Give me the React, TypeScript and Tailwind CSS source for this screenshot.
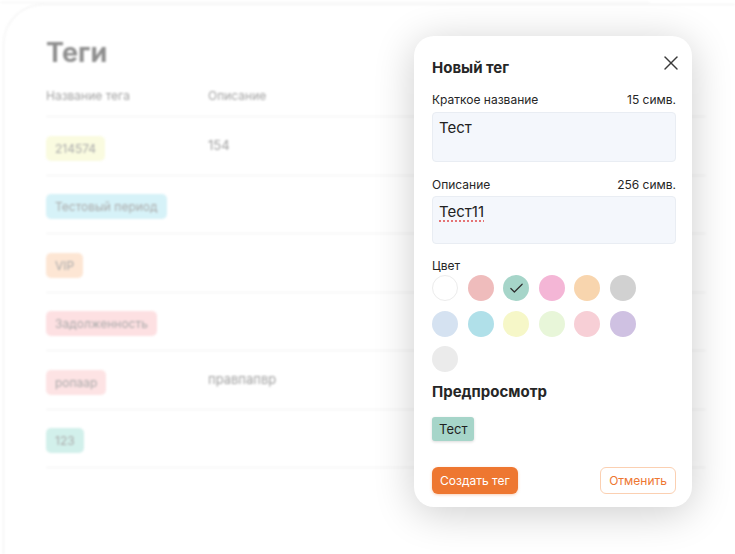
import { X, Check } from 'lucide-react';

const rows = [
    { name: '214574', bg: 'bg-[#fafbe0]', desc: '154' },
    { name: 'Тестовый период', bg: 'bg-[#d6f2f8]', desc: '' },
    { name: 'VIP', bg: 'bg-[#fde6d4]', desc: '' },
    { name: 'Задолженность', bg: 'bg-[#fde0e2]', desc: '' },
    { name: 'ропаар', bg: 'bg-[#fde3e4]', desc: 'правпапвр' },
    { name: '123', bg: 'bg-[#d2f0eb]', desc: '' },
];

const colors = [
    'bg-white border border-[#ececec]',
    'bg-[#efbcbc]',
    'bg-[#a6d5c9]',
    'bg-[#f4b6d6]',
    'bg-[#f8d5ae]',
    'bg-[#d1d1d1]',
    'bg-[#d5e2f1]',
    'bg-[#b0e0e9]',
    'bg-[#f6f7c8]',
    'bg-[#e8f6d9]',
    'bg-[#f7cfd6]',
    'bg-[#cfc1e2]',
    'bg-[#ebebeb]',
];

function TagsPage() {
    return (
        <div className="h-full pt-[4px] pl-[3px] blur-[1.2px]">
            <div className="h-full rounded-tl-[40px] border-l border-t border-[#f0f0f0] pl-[42px] pt-[30px]">
                <div className="text-[27px] leading-[36px] font-bold text-[#8e8e8e]">Теги</div>
                <div className="w-[660px]">
                    <div className="flex h-[46px] items-end pb-[11px] text-[12px] text-[#a3a3a3] border-b border-[#f2f2f2]">
                        <div className="w-[162px]">Название тега</div>
                        <div>Описание</div>
                    </div>
                    {rows.map((r, i) => (
                        <div key={i} className="flex h-[58.5px] items-center border-b border-[#f2f2f2]">
                            <div className="w-[162px] pt-[4px]">
                                <span className={`${r.bg} inline-block rounded-[5px] px-[9px] py-[5px] text-[12px] leading-[15px] text-[#ababab]`}>
                                    {r.name}
                                </span>
                            </div>
                            <div className="text-[13px] text-[#a0a0a0] -mt-[1px]">{r.desc}</div>
                        </div>
                    ))}
                </div>
            </div>
        </div>
    );
}

function NewTagModal() {
    return (
        <div className="absolute left-[414px] top-[36px] w-[278px] h-[471px] rounded-[20px] bg-white shadow-[0_6px_40px_rgba(0,0,0,0.2)] pl-[18px] pr-[16px] pt-[22px]">
            <button className="absolute right-[9px] top-[15px] text-[#3a3a3a]">
                <X size={24} strokeWidth={1.4} />
            </button>
            <div className="text-[15px] leading-[20px] font-bold text-[#262626]">Новый тег</div>

            <div className="mt-[14px] flex justify-between text-[12px] leading-[16px] text-[#262626]">
                <span>Краткое название</span>
                <span>15 симв.</span>
            </div>
            <div className="mt-[4px] h-[50px] rounded-[4px] border border-[#e9edf3] bg-[#f4f7fc] px-[6px] py-[5px] text-[15px] leading-[20px] text-[#222]">
                Тест
            </div>

            <div className="mt-[15px] flex justify-between text-[12px] leading-[16px] text-[#262626]">
                <span>Описание</span>
                <span>256 симв.</span>
            </div>
            <div className="mt-[3px] h-[48px] rounded-[4px] border border-[#e9edf3] bg-[#f4f7fc] px-[6px] py-[5px] text-[15px] leading-[20px] text-[#222]">
                <span className="underline decoration-dotted decoration-[#e04848] underline-offset-[4px]">Тест11</span>
            </div>

            <div className="mt-[14px] text-[12px] leading-[16px] text-[#262626]">Цвет</div>
            <div className="mt-[1px] grid grid-cols-[repeat(6,26px)] gap-x-[9.6px] gap-y-[9.5px]">
                {colors.map((c, i) => (
                    <div key={i} className={`${c} flex h-[26px] w-[26px] items-center justify-center rounded-full`}>
                        {i === 2 && <Check size={17} strokeWidth={1.7} className="text-[#2d2d2d]" />}
                    </div>
                ))}
            </div>

            <div className="mt-[10px] text-[15px] leading-[20px] font-bold text-[#262626]">Предпросмотр</div>
            <div className="mt-[15px] flex">
                <span className="rounded-[3px] bg-[#a6d5c9] px-[7px] py-[3px] text-[13px] leading-[18px] text-[#1f1f1f] shadow-[0_1px_3px_rgba(0,0,0,0.15)]">
                    Тест
                </span>
            </div>

            <div className="mt-[26px] flex justify-between">
                <button className="h-[27px] rounded-[6px] bg-[#ee7731] px-[8px] text-[12px] text-white shadow-[0_1px_3px_rgba(238,119,49,0.35)]">
                    Создать тег
                </button>
                <button className="h-[27px] rounded-[6px] border border-[#fbd0b2] bg-white px-[8px] text-[12px] text-[#ee7731]">
                    Отменить
                </button>
            </div>
        </div>
    );
}

export default function App() {
    return (
        <div className="relative w-[735px] h-[554px] overflow-hidden bg-white font-['Inter',sans-serif]">
            <div className="h-[1px] w-[650px] mt-[2px] bg-[#f4f4f4] blur-[1px]" />
            <div className="absolute inset-0">
                <TagsPage />
            </div>
            <NewTagModal />
        </div>
    );
}
